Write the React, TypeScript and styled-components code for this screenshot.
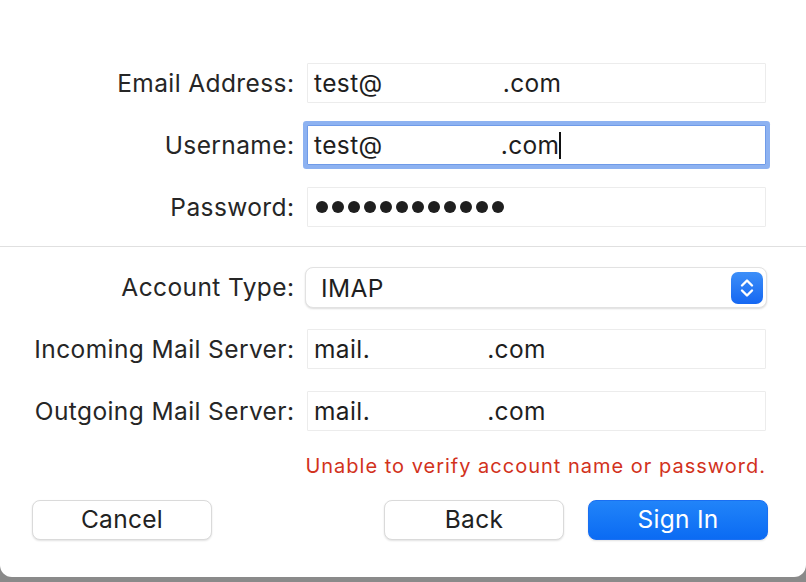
import React from "react";
import styled, { createGlobalStyle } from "styled-components";

const Global = createGlobalStyle`
  html, body { margin: 0; padding: 0; background: #8a8a8a; }
  body { font-family: Inter, "Liberation Sans", Arial, sans-serif; -webkit-font-smoothing: antialiased; }
  #root { width: 806px; height: 582px; overflow: hidden; background: #8a8a8a; }
`;

const Window = styled.div`
  width: 806px;
  height: 577px;
  box-sizing: border-box;
  background: #fff;
  border-radius: 0 0 12px 12px;
  padding-top: 63px;
  display: flex;
  flex-direction: column;
`;

const Section = styled.div`
  display: grid;
  grid-template-columns: 294px 459px;
  column-gap: 13px;
  row-gap: 22px;
  grid-auto-rows: 40px;
`;

const Label = styled.div`
  align-self: center;
  text-align: right;
  font-size: 24.5px;
  letter-spacing: 0.4px;
  margin-right: -0.4px;
  color: #262626;
  white-space: nowrap;
`;

const Field = styled.div<{ $focused?: boolean }>`
  box-sizing: border-box;
  height: 40px;
  background: #fff;
  border: 1px solid #ececec;
  border-bottom-color: #c9c9c9;
  border-radius: 1px;
  display: flex;
  align-items: center;
  padding-left: 6px;
  font-size: 24.5px;
  letter-spacing: 0.4px;
  color: #1e1e1e;
  white-space: nowrap;
  box-shadow: ${(p) => (p.$focused ? "0 0 0 4px #8db2f1" : "none")};
  border-color: ${(p) => (p.$focused ? "#6f9be8" : "#ececec")};
`;

const Blank = styled.span<{ $w: number }>`
  display: inline-block;
  width: ${(p) => p.$w}px;
`;

const Caret = styled.span`
  display: inline-block;
  width: 2px;
  height: 27px;
  background: #111;
`;

const Dots = styled.div`
  display: flex;
  gap: 4px;
  padding-left: 2px;
`;

const Dot = styled.span`
  width: 12px;
  height: 12px;
  border-radius: 50%;
  background: #1f1f1f;
`;

const Divider = styled.div`
  height: 1px;
  background: #e0e0e0;
  margin: 19px 0 20px;
`;

const Popup = styled.div`
  box-sizing: border-box;
  height: 41px;
  margin-left: -2px;
  margin-right: -1px;
  background: #fff;
  border: 1px solid #e2e2e2;
  border-radius: 8px;
  box-shadow: 0 1px 2px rgba(0, 0, 0, 0.14);
  display: flex;
  align-items: center;
  justify-content: space-between;
  padding: 0 3px 0 15px;
  font-size: 24.5px;
  letter-spacing: 0.4px;
  color: #1e1e1e;
`;

const Stepper = styled.div`
  width: 32px;
  height: 32px;
  border-radius: 7px;
  background: linear-gradient(#3d8ff8, #1567f2);
  display: flex;
  align-items: center;
  justify-content: center;
`;

const ErrorText = styled.div`
  margin-top: 23px;
  padding-right: 40px;
  text-align: right;
  font-size: 20px;
  letter-spacing: 1px;
  line-height: 24px;
  color: #d2321c;
`;

const ButtonRow = styled.div`
  margin-top: 22px;
  display: flex;
  align-items: center;
  padding: 0 38px 0 32px;
`;

const Spacer = styled.div`
  flex: 1;
`;

const Button = styled.button<{ $primary?: boolean }>`
  width: 180px;
  height: 40px;
  padding: 0 0 2px;
  border-radius: 8px;
  font-family: inherit;
  font-size: 24.5px;
  letter-spacing: 0.3px;
  cursor: default;
  border: 1px solid ${(p) => (p.$primary ? "#1a6ff2" : "#dadada")};
  background: ${(p) => (p.$primary ? "linear-gradient(#2184f9, #0b6bf3)" : "#fff")};
  color: ${(p) => (p.$primary ? "#fff" : "#222")};
  box-shadow: 0 1px 2px rgba(0, 0, 0, 0.12);
  & + & { margin-left: 24px; }
`;

export default function App() {
  return (
    <>
      <Global />
      <Window>
        <Section>
          <Label>Email Address:</Label>
          <Field>
            test@<Blank $w={120} />.com
          </Field>
          <Label>Username:</Label>
          <Field $focused>
            test@<Blank $w={118} />.com<Caret />
          </Field>
          <Label>Password:</Label>
          <Field>
            <Dots>
              {Array.from({ length: 12 }).map((_, i) => (
                <Dot key={i} />
              ))}
            </Dots>
          </Field>
        </Section>
        <Divider />
        <Section>
          <Label>Account Type:</Label>
          <Popup>
            IMAP
            <Stepper>
              <svg width="16" height="22" viewBox="0 0 16 22" fill="none">
                <path d="M3 8.5 L8 3.5 L13 8.5" stroke="#fff" strokeWidth="2.4" strokeLinecap="round" strokeLinejoin="round" />
                <path d="M3 13.5 L8 18.5 L13 13.5" stroke="#fff" strokeWidth="2.4" strokeLinecap="round" strokeLinejoin="round" />
              </svg>
            </Stepper>
          </Popup>
          <Label>Incoming Mail Server:</Label>
          <Field>
            mail.<Blank $w={117} />.com
          </Field>
          <Label>Outgoing Mail Server:</Label>
          <Field>
            mail.<Blank $w={117} />.com
          </Field>
        </Section>
        <ErrorText>Unable to verify account name or password.</ErrorText>
        <ButtonRow>
          <Button>Cancel</Button>
          <Spacer />
          <Button>Back</Button>
          <Button $primary>Sign In</Button>
        </ButtonRow>
      </Window>
    </>
  );
}
